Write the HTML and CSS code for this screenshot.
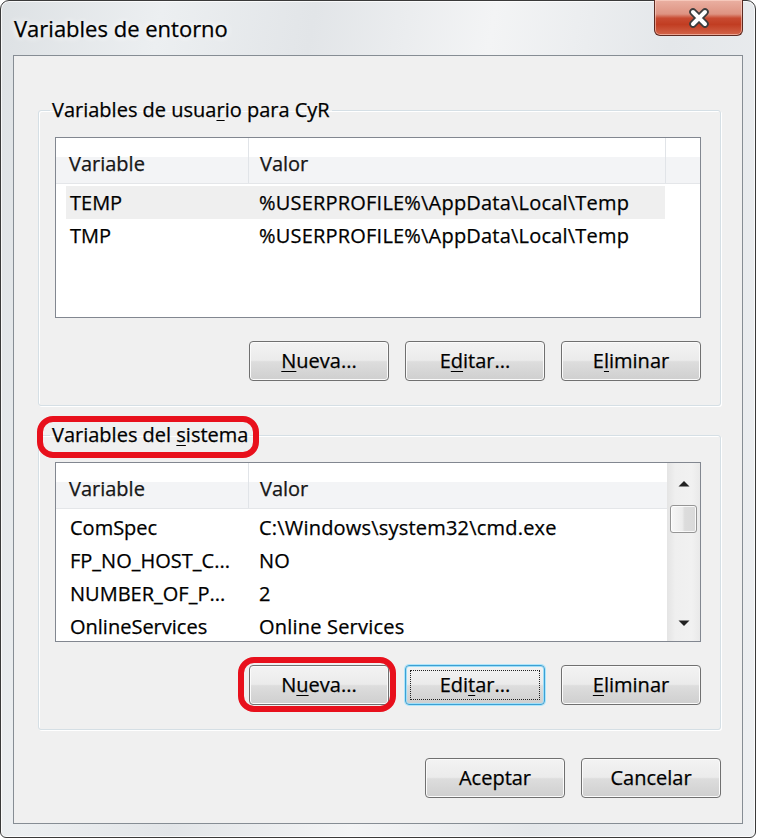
FILE: index.html
```html
<!DOCTYPE html>
<html lang="es">
<head>
<meta charset="utf-8">
<title>Variables de entorno</title>
<link rel="stylesheet" href="styles.css">
</head>
<body>
<div class="window">
  <div class="titlebar">
    <span class="title">Variables de entorno</span>
    <div class="close">
      <svg width="22" height="20" viewBox="0 0 22 20">
        <path d="M5 4 L17 16 M17 4 L5 16" stroke="#3d3d3d" stroke-width="7.5" stroke-linecap="round" fill="none"/>
        <path d="M5 4 L17 16 M17 4 L5 16" stroke="#ffffff" stroke-width="4" stroke-linecap="round" fill="none"/>
      </svg>
    </div>
  </div>
  <div class="client">
    <fieldset class="group g1">
      <legend>Variables de usua<u>r</u>io para CyR</legend>
      <div class="lv lv1">
        <div class="lv-main">
          <div class="lv-head">
            <div class="hcol h1">Variable</div>
            <div class="hcol h2">Valor</div>
            <div class="hcol h3"></div>
          </div>
          <div class="lv-body">
            <div class="row sel"><span class="cv">TEMP</span><span class="cval">%USERPROFILE%\AppData\Local\Temp</span></div>
            <div class="row"><span class="cv">TMP</span><span class="cval">%USERPROFILE%\AppData\Local\Temp</span></div>
          </div>
        </div>
      </div>
      <div class="btnrow">
        <div class="btn"><span><u>N</u>ueva...</span></div>
        <div class="btn"><span>E<u>d</u>itar...</span></div>
        <div class="btn"><span>E<u>l</u>iminar</span></div>
      </div>
    </fieldset>

    <fieldset class="group g2">
      <legend>Variables del <u>s</u>istema</legend>
      <div class="lv lv2">
        <div class="lv-main">
          <div class="lv-head">
            <div class="hcol h1">Variable</div>
            <div class="hcol h2">Valor</div>
          </div>
          <div class="lv-body">
            <div class="row"><span class="cv">ComSpec</span><span class="cval">C:\Windows\system32\cmd.exe</span></div>
            <div class="row"><span class="cv">FP_NO_HOST_C...</span><span class="cval">NO</span></div>
            <div class="row"><span class="cv">NUMBER_OF_P...</span><span class="cval">2</span></div>
            <div class="row"><span class="cv">OnlineServices</span><span class="cval">Online Services</span></div>
          </div>
        </div>
        <div class="sb">
          <div class="sb-btn sb-up">
            <svg width="12" height="7" viewBox="0 0 12 7"><path d="M0.5 6.5 L6 1 L11.5 6.5 Z" fill="#222"/></svg>
          </div>
          <div class="sb-thumb"></div>
          <div class="sb-track"></div>
          <div class="sb-btn sb-down">
            <svg width="12" height="7" viewBox="0 0 12 7"><path d="M0.5 0.5 L6 6 L11.5 0.5 Z" fill="#222"/></svg>
          </div>
        </div>
      </div>
      <div class="btnrow">
        <div class="btn"><span>N<u>u</u>eva...</span></div>
        <div class="btn focus"><span>Edi<u>t</u>ar...</span></div>
        <div class="btn"><span><u>E</u>liminar</span></div>
      </div>
    </fieldset>

    <div class="btnrow dialog-btns">
      <div class="btn"><span>Aceptar</span></div>
      <div class="btn"><span>Cancelar</span></div>
    </div>
  </div>
  <div class="mark mark1"></div>
  <div class="mark mark2"></div>
</div>
</body>
</html>
```
FILE: styles.css
```css
* { box-sizing: border-box; }

html, body {
  margin: 0;
  padding: 0;
}

body {
  width: 757px;
  height: 838px;
  overflow: hidden;
  background: #ffffff;
  font-family: "Open Sans", "Noto Sans", "DejaVu Sans", sans-serif;
  font-size: 20px;
  color: #000;
  -webkit-text-stroke: 0.25px #000;
}

u { text-decoration: underline; text-underline-offset: 3px; text-decoration-thickness: 1px; }

.window {
  position: relative;
  width: 756px;
  height: 838px;
  border: 1px solid #3a3a3a;
  border-radius: 9px 9px 6px 6px;
  background: linear-gradient(100deg, #dde1e4 0%, #eceff1 18%, #e2e5e8 35%, #f3f4f5 55%, #e4e7ea 75%, #eef0f2 100%);
  box-shadow: inset 0 0 0 1px rgba(255,255,255,0.75);
  display: flex;
  flex-direction: column;
}

.titlebar {
  height: 54px;
  flex: none;
  display: flex;
  align-items: flex-start;
  justify-content: space-between;
  padding-left: 13px;
}

.title {
  margin-top: 13px;
  font-size: 22px;
  line-height: 28px;
  color: #000;
  text-shadow: 0 0 6px #fff, 0 0 10px #fff;
}

.close {
  width: 89px;
  height: 36px;
  margin-top: -1px;
  margin-right: 12px;
  border: 1px solid #5d2a21;
  border-top: none;
  border-radius: 0 0 6px 6px;
  background: linear-gradient(#eab0a2 0%, #de9382 40%, #c84a31 52%, #c13d22 70%, #d3654a 100%);
  box-shadow: inset 0 0 0 1px rgba(255,220,210,0.55);
  display: flex;
  align-items: center;
  justify-content: center;
}

.client {
  flex: 1;
  margin: 0 12px 13px 12px;
  border: 1px solid #868d94;
  background: #f0f0f0;
  display: flex;
  flex-direction: column;
  padding: 0 21px 0 24px;
}

.group {
  margin: 0;
  border: 1px solid #d5dfe5;
  border-radius: 3px;
  box-shadow: inset 1px 1px 0 #fff, 1px 1px 0 #fff;
  padding: 15px 19px 24px 16px;
  min-width: 0;
}

.g1 { margin-top: 42px; }
.g2 { margin-top: 17px; }

.group legend {
  padding: 0 2px;
  margin-left: -5px;
  line-height: 24px;
}

.lv {
  border: 1px solid #828790;
  background: #fff;
  display: flex;
  overflow: hidden;
}

.lv1 { height: 181px; }
.lv2 { height: 180px; }

.lv-main {
  flex: 1;
  display: flex;
  flex-direction: column;
  min-width: 0;
}

.lv-head {
  height: 46px;
  flex: none;
  display: flex;
  background: linear-gradient(#ffffff 0, #ffffff 19px, #f3f4f6 19px, #f3f4f6 100%);
  border-bottom: 1px solid #e4e6e9;
  color: #1a1a1a;
}

.hcol {
  line-height: 46px;
  padding-top: 3px;
  white-space: nowrap;
}

.h1 {
  width: 193px;
  padding-left: 13px;
  border-right: 1px solid #e1e4e8;
}

.h2 {
  padding-left: 11px;
  flex: 1;
}

.lv1 .h2 {
  flex: none;
  width: 417px;
  border-right: 1px solid #e1e4e8;
}

.h3 { flex: 1; }

.lv-body {
  padding-top: 2px;
  flex: 1;
  overflow: hidden;
}

.row {
  display: flex;
  align-items: center;
  height: 33px;
  margin-left: 10px;
  width: 599px;
  white-space: nowrap;
}

.row.sel { background: #efefef; }

.cv {
  width: 182px;
  padding-left: 4px;
  flex: none;
}

.cval { padding-left: 11px; letter-spacing: 0.2px; }

.sb {
  width: 33px;
  flex: none;
  display: flex;
  flex-direction: column;
  align-items: center;
  background: linear-gradient(to right, #e4e4e4 0, #efefef 25%, #f1f1f1 75%, #e9e9e9 100%);
}

.sb-btn {
  width: 100%;
  display: flex;
  align-items: center;
  justify-content: center;
}

.sb-up { height: 40px; }
.sb-down { height: 36px; }

.sb-thumb {
  width: 27px;
  height: 28px;
  margin-top: 2px;
  border: 1px solid #959595;
  border-radius: 3px;
  background: linear-gradient(to right, #f7f7f7 0, #ececec 45%, #dcdcdc 55%, #d9d9d9 100%);
  box-shadow: inset 0 0 0 1px rgba(255,255,255,0.8);
}

.sb-track { flex: 1; }

.btnrow {
  display: flex;
  justify-content: flex-end;
  gap: 16px;
  margin-top: 23px;
}

.btn {
  position: relative;
  width: 140px;
  height: 40px;
  border: 1px solid #707070;
  border-radius: 4px;
  background: linear-gradient(#f3f3f3 0, #ebebeb 48%, #dddddd 52%, #cfcfcf 100%);
  box-shadow: inset 0 0 0 1px #fbfbfb;
  display: flex;
  align-items: center;
  justify-content: center;
  line-height: 24px;
  color: #000;
}

.btn.focus {
  border-color: #3d9fd3;
  box-shadow: inset 0 0 0 1px #9fdff8, 0 0 0 1px #aee6fb;
}

.btn.focus::after {
  content: "";
  position: absolute;
  left: 4px;
  right: 4px;
  top: 4px;
  bottom: 4px;
  border: 1px dotted #222;
}

.dialog-btns { margin-top: 28px; }

.mark {
  position: absolute;
  border: 6px solid #e8101c;
  border-radius: 16px;
  pointer-events: none;
}

.mark1 {
  left: 36px;
  top: 415px;
  width: 222px;
  height: 42px;
}

.mark2 {
  left: 237px;
  top: 656px;
  width: 158px;
  height: 55px;
}
```
